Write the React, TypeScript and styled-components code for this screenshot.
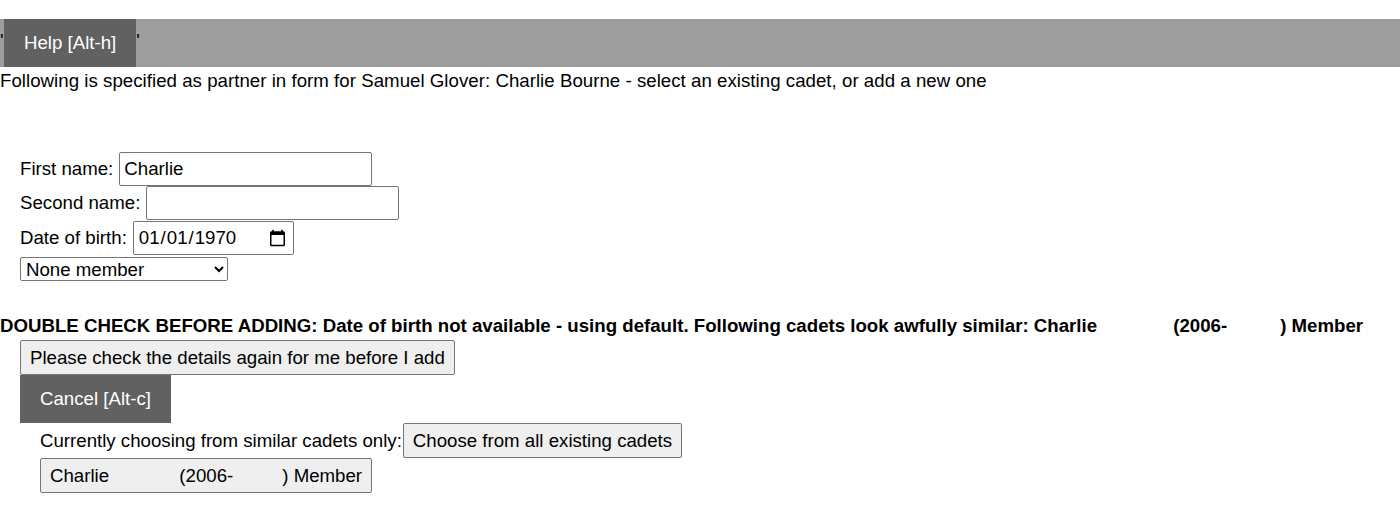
import styled, { createGlobalStyle } from 'styled-components';

const Global = createGlobalStyle`
  body {
    margin: 0;
    background: #ffffff;
    font-family: "Liberation Sans", Arial, sans-serif;
    font-size: 18.67px;
    color: #000000;
  }
`;

const Page = styled.div`
  padding-top: 19px;
`;

const TopBar = styled.div`
  display: flex;
  align-items: center;
  height: 48px;
  background: #9e9e9e;
`;

const Tick = styled.span`
  width: 4px;
  margin-top: -4px;
  line-height: 22px;
`;

const DarkButton = styled.button`
  height: 48px;
  padding: 0 20px;
  border: none;
  background: #616161;
  color: #ffffff;
  font-family: inherit;
  font-size: 18.67px;
`;

const Intro = styled.p`
  margin: 3px 0 0 0;
  line-height: 22px;
  letter-spacing: 0.03px;
`;

const Form = styled.div`
  margin-top: 60px;
  padding-left: 20px;
  display: flex;
  flex-direction: column;
  align-items: flex-start;
`;

const FieldRow = styled.label<{ $gap?: number }>`
  display: flex;
  align-items: center;
  gap: 6px;
  margin-bottom: ${(p) => p.$gap ?? 0}px;
`;

const TextInput = styled.input<{ $w: number }>`
  box-sizing: border-box;
  width: ${(p) => p.$w}px;
  height: 34px;
  padding: 0 4px;
  border: 1px solid #767676;
  border-radius: 2px;
  font-family: inherit;
  font-size: 18.67px;
`;

const Select = styled.select`
  box-sizing: border-box;
  width: 208px;
  height: 24px;
  margin-top: 2px;
  border: 1px solid #767676;
  border-radius: 2px;
  background: #ffffff;
  font-family: inherit;
  font-size: 18.67px;
  padding: 0 1px;
`;

const Warning = styled.p`
  margin: 34px 0 3px 0;
  font-weight: bold;
  line-height: 22px;
`;

const Blank = styled.span<{ $w: number }>`
  display: inline-block;
  width: ${(p) => p.$w}px;
`;

const Actions = styled.div`
  padding-left: 20px;
  display: flex;
  flex-direction: column;
  align-items: flex-start;
`;

const GreyButton = styled.button`
  box-sizing: border-box;
  height: 35px;
  padding: 0 9px;
  border: 1px solid #767676;
  border-radius: 2px;
  background: #efefef;
  color: #000000;
  font-family: inherit;
  font-size: 18.67px;
`;

const Choices = styled.div`
  padding-left: 20px;
  display: flex;
  flex-direction: column;
  align-items: flex-start;
`;

const ChoiceRow = styled.div`
  display: flex;
  align-items: center;
  gap: 1px;
`;

export default function App() {
  return (
    <>
      <Global />
      <Page>
        <TopBar>
          <Tick>'</Tick>
          <DarkButton>Help [Alt-h]</DarkButton>
          <Tick>'</Tick>
        </TopBar>
        <Intro>
          Following is specified as partner in form for Samuel Glover: Charlie Bourne - select an existing cadet, or add a
          new one
        </Intro>
        <Form>
          <FieldRow>
            First name: <TextInput $w={253} defaultValue="Charlie" />
          </FieldRow>
          <FieldRow $gap={1}>
            Second name: <TextInput $w={253} defaultValue="" />
          </FieldRow>
          <FieldRow>
            Date of birth: <TextInput $w={161} type="date" defaultValue="1970-01-01" />
          </FieldRow>
          <Select defaultValue="none">
            <option value="none">None member</option>
            <option value="member">Member</option>
          </Select>
        </Form>
        <Warning>
          DOUBLE CHECK BEFORE ADDING: Date of birth not available - using default. Following cadets look awfully similar:
          Charlie <Blank $w={71} />(2006-<Blank $w={53} />) Member
        </Warning>
        <Actions>
          <GreyButton>Please check the details again for me before I add</GreyButton>
          <DarkButton>Cancel [Alt-c]</DarkButton>
          <Choices>
            <ChoiceRow>
              Currently choosing from similar cadets only:
              <GreyButton>Choose from all existing cadets</GreyButton>
            </ChoiceRow>
            <GreyButton>
              Charlie <Blank $w={65} />(2006-<Blank $w={49} />) Member
            </GreyButton>
          </Choices>
        </Actions>
      </Page>
    </>
  );
}
